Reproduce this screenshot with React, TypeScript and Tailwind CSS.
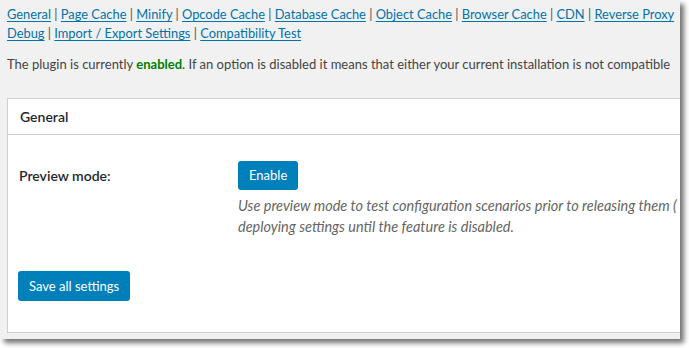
const links = [
  "General",
  "Page Cache",
  "Minify",
  "Opcode Cache",
  "Database Cache",
  "Object Cache",
  "Browser Cache",
  "CDN",
  "Reverse Proxy",
];

const links2 = ["Debug", "Import / Export Settings", "Compatibility Test"];

const NavLine = ({ items }: { items: string[] }) => (
  <div className="whitespace-nowrap text-[12.85px]">
    {items.map((item, i) => (
      <span key={item}>
        <a href="#" className="text-[#0073aa] underline underline-offset-2">
          {item}
        </a>
        {i < items.length - 1 && <span className="text-[#555]"> | </span>}
      </span>
    ))}
  </div>
);

export default function App() {
  return (
    <div className="w-[689px] h-[348px] bg-white font-['Lato',sans-serif]">
      <div className="w-[680px] h-[339px] bg-[#f1f1f1] overflow-hidden shadow-[4px_4px_5px_rgba(0,0,0,0.55)]">
        <div className="w-[780px] pl-[7px] pt-[5px] text-[13px] leading-[19px] text-[#444]">
          <NavLine items={links} />
          <NavLine items={links2} />
          <p className="mt-[12px] whitespace-nowrap">
            The plugin is currently <span className="font-bold text-[#008000]">enabled</span>. If an
            option is disabled it means that either your current installation is not compatible
          </p>

          <div className="mt-[24px] bg-white border border-[#ccd0d4]">
            <div className="h-[36px] px-[12px] flex items-center border-b border-[#ccd0d4] text-[14px] font-semibold text-[#23282d]">
              General
            </div>
            <div className="px-[10px] pt-[26px] pb-[31px]">
              <div className="flex">
                <div className="w-[220px] shrink-0 pl-[1px] pt-[5px] text-[14px] font-semibold text-[#23282d]">
                  Preview mode:
                </div>
                <div>
                  <button className="h-[29px] px-[11px] rounded-[3px] bg-[#0080ba] text-white text-[13px]">
                    Enable
                  </button>
                  <p className="mt-[5px] italic text-[14.5px] text-[#666] leading-[21px] whitespace-nowrap">
                    Use preview mode to test configuration scenarios prior to releasing them (
                    <br />
                    deploying settings until the feature is disabled.
                  </p>
                </div>
              </div>
              <button className="mt-[34px] h-[30px] px-[11px] rounded-[3px] bg-[#0080ba] text-white text-[13px]">
                Save all settings
              </button>
            </div>
          </div>
        </div>
      </div>
    </div>
  );
}
